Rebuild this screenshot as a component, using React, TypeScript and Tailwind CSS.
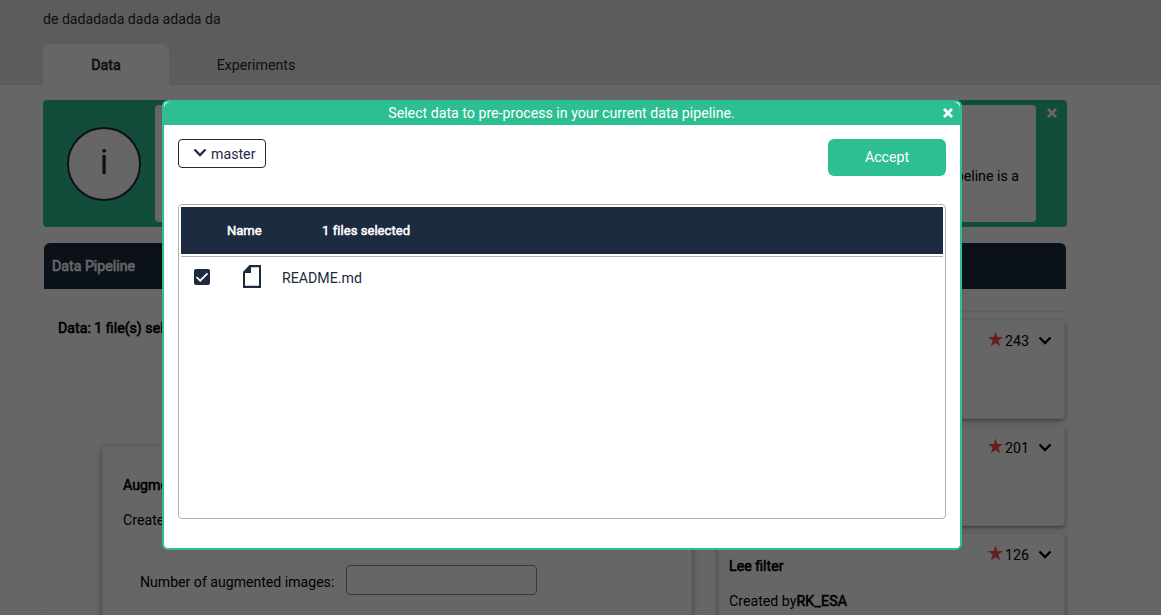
import React from "react";

const operations = [
  { name: "Augment", author: "mlreef", stars: 243 },
  { name: "Random crop", author: "mlreef", stars: 201 },
  { name: "Lee filter", author: "RK_ESA", stars: 126 },
];

function Chevron({ className }: { className?: string }) {
  return (
    <svg viewBox="0 0 14 9" className={`h-[9px] w-[14px] shrink-0 ${className ?? ""}`} fill="none" stroke="currentColor" strokeWidth="2.3">
      <path d="M1.5 1.5 L7 7 L12.5 1.5" />
    </svg>
  );
}

function Cross({ className }: { className?: string }) {
  return (
    <svg viewBox="0 0 10 10" className={`size-[10px] shrink-0 ${className ?? ""}`} fill="none" stroke="currentColor" strokeWidth="2.8">
      <path d="M1 1 L9 9 M9 1 L1 9" />
    </svg>
  );
}

function Star() {
  return (
    <svg viewBox="0 0 16 16" className="h-4 w-[15px] shrink-0 fill-[#ff4e4e]">
      <path d="M8 0 L9.9 5.9 H16 L11.1 9.7 L13 16 L8 12.2 L3 16 L4.9 9.7 L0 5.9 H6.1 Z" />
    </svg>
  );
}

function Header() {
  return (
    <header className="flex h-[85px] flex-col justify-between bg-[#e5e5e5] pl-[43px] text-[#1d2b40]">
      <p className="pt-[9px] text-[14.1px] leading-5">de dadadada dada adada da</p>
      <nav className="flex h-[41px] leading-[42px]">
        <div className="w-[126px] rounded-t-lg bg-white text-center [-webkit-text-stroke:0.6px]">Data</div>
        <div className="w-[174px] text-center">Experiments</div>
      </nav>
    </header>
  );
}

function InfoBanner() {
  return (
    <section className="flex h-[127px] rounded-[4px] bg-[#2dbe91] py-[5px]">
      <div className="flex w-28 shrink-0 items-center pl-6">
        <div className="flex size-[74px] items-center justify-center rounded-full border-2 border-[#1d2b40] bg-white text-[35px] text-[#1d2b40]">
          i
        </div>
      </div>
      <div className="flex w-[881px] items-center justify-end rounded-[4px] bg-white pr-[17px] pt-[27px]">
        A data pipeline is a
      </div>
      <Cross className="ml-[11px] mt-[3px] text-white" />
    </section>
  );
}

function Page() {
  return (
    <div>
      <Header />
      <main className="ml-[43px] mt-[15px] w-[1024px]">
        <InfoBanner />
        <div className="mt-4 flex h-[372px] justify-between pr-px">
          <section className="w-[666px] border-x border-[#f4f4f4]">
            <h2 className="h-[46px] rounded-t-[6px] bg-[#1d2b40] pl-2 leading-[46px] text-white [-webkit-text-stroke:0.6px]">Data Pipeline</h2>
            <div className="h-[116px] border-b border-[#f4f4f4] pl-[14px] pt-[29px] leading-5 [-webkit-text-stroke:0.6px]">Data: 1 file(s) selected</div>
            <div className="ml-[58px] mt-[41px] h-[169px] w-[590px] rounded-t-[4px] border border-b-0 border-[#f0f0f0] pl-5 pt-[28px] leading-5 shadow-[0_2px_6px_rgba(0,0,0,0.4)]">
              <h3 className="[-webkit-text-stroke:0.6px]">Augment</h3>
              <p className="mt-[15px]">Created by mlreef</p>
              <label className="ml-[17px] mt-[35px] flex items-center">
                <span className="w-[206px] pt-[3px] text-[14.1px]">Number of augmented images:</span>
                <input className="h-[30px] w-[191px] rounded-[4px] border border-[#8a8c94]" />
              </label>
            </div>
          </section>
          <section className="w-[348px]">
            <h2 className="h-[46px] rounded-t-[6px] bg-[#1d2b40]" />
            <div className="mb-[7px] h-[23px] border-b border-[#e8e8e8]" />
            {operations.map((op) => (
              <article key={op.name} className="mb-[7px] mr-px flex h-[100px] justify-between rounded-[4px] border border-[#eeeeee] pl-[10px] shadow-[0_2px_4px_rgba(0,0,0,0.4)]">
                <div className="pt-[22px] leading-5">
                  <h3 className="[-webkit-text-stroke:0.6px]">{op.name}</h3>
                  <p className="mt-[15px]">Created by<span className="tracking-[0.15px] [-webkit-text-stroke:0.6px]">{op.author}</span></p>
                </div>
                <div className="flex h-5 pr-3 pt-[11px] leading-5">
                  <Star />
                  <span className="ml-[2px] w-[33px]">{op.stars}</span>
                  <Chevron className="mt-[5px]" />
                </div>
              </article>
            ))}
          </section>
        </div>
      </main>
    </div>
  );
}

function SelectModal() {
  return (
    <div className="fixed inset-0 flex items-start justify-center bg-black/60 pr-[37px] pt-[100px]">
      <div className="h-[450px] w-[800px] rounded-[6px] border-2 border-[#2dbe91] bg-white">
        <div className="flex h-[23px] items-center rounded-t-[6px] bg-[#2dbe91] pr-[7px] text-white">
          <p className="grow pl-[16px] text-center">Select data to pre-process in your current data pipeline.</p>
          <Cross className="mb-px" />
        </div>
        <div className="px-[14px] pt-[14px]">
          <div className="flex items-start justify-between">
            <button className="flex h-[29px] w-[88px] items-center rounded-[4px] border border-[#1d2b40] pl-[14px] text-[#1d2b40]">
              <Chevron className="mb-[3px]" />
              <span className="ml-1 pt-[3px]">master</span>
            </button>
            <button className="h-[37px] w-[118px] rounded-[6px] bg-[#2dbe91] text-white">Accept</button>
          </div>
          <div className="mt-[28px] h-[315px] rounded-[4px] border border-[#b2b2b2] p-[2px] text-[#1d2b40]">
            <div className="flex h-[47px] items-center bg-[#1d2b40] pl-[46px] text-[13px] text-white [-webkit-text-stroke:0.5px]">
              <span className="w-[95px]">Name</span>
              <span className="tracking-[0.06px]">1 files selected</span>
            </div>
            <div className="mt-[2px] flex h-[42px] items-center border-t border-[#b2b2b2] pl-[12.5px]">
              <svg viewBox="0 0 16 16" className="mb-px size-4">
                <rect width="16" height="16" rx="2" fill="#1d2b40" />
                <path d="M2.5 8 L6.2 11.7 L13.5 4.3" fill="none" stroke="white" strokeWidth="1.7" />
              </svg>
              <svg viewBox="0 0 18 23" className="mb-[3px] ml-[33.5px] h-[23px] w-[18px]">
                <path fillRule="evenodd" fill="#1d2b40" d="M6.5 0 H18 V23 H0 V7 Z M8 2.3 V8 H2 V20.8 H16 V2.3 Z" />
              </svg>
              <span className="ml-[21px] pt-[3px]">README.md</span>
            </div>
          </div>
        </div>
      </div>
    </div>
  );
}

export default function App() {
  return (
    <div className="h-[615px] overflow-hidden bg-white font-['Roboto',sans-serif] text-[14.2px] text-black">
      <Page />
      <SelectModal />
    </div>
  );
}
